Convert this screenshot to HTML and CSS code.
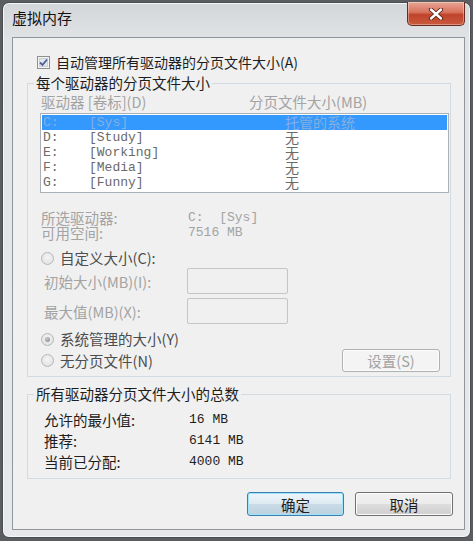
FILE: index.html
```html
<!DOCTYPE html>
<html lang="zh-CN">
<head>
    <meta charset="UTF-8">
    <meta name="viewport" content="width=device-width, initial-scale=1.0">
    <title>虚拟内存</title>
    <link rel="stylesheet" href="styles.css">
</head>
<body>
    <div class="window">
        <div class="titlebar">
            <span class="title">虚拟内存</span>
            <button class="close-btn">
                <svg width="16" height="12" viewBox="0 0 16 12">
                    <path d="M3 1.5 L13 10.5 M13 1.5 L3 10.5" stroke="#5a1d14" stroke-width="4.2" stroke-linecap="round"/>
                    <path d="M3 1.5 L13 10.5 M13 1.5 L3 10.5" stroke="#ffffff" stroke-width="2.4" stroke-linecap="round"/>
                </svg>
            </button>
        </div>

        <div class="client">
            <label class="check-row">
                <span class="checkbox">
                    <svg width="13" height="13" viewBox="0 0 13 13">
                        <rect x="0.5" y="0.5" width="12" height="12" fill="#f4f4f4" stroke="#8e8f8f"/>
                        <rect x="2.5" y="2.5" width="8" height="8" fill="#e2e6ea" stroke="#c9d0d6"/>
                        <path d="M3 6.5 L5.5 9 L10 3.5" fill="none" stroke="#4a5f97" stroke-width="1.8"/>
                    </svg>
                </span>
                自动管理所有驱动器的分页文件大小(A)
            </label>

            <fieldset class="group group-drives">
                <legend>每个驱动器的分页文件大小</legend>

                <div class="list-head">
                    <span class="col-drive">驱动器 [卷标](D)</span>
                    <span>分页文件大小(MB)</span>
                </div>

                <div class="listbox">
                    <div class="row selected"><span class="c1">C:</span><span class="c2">[Sys]</span><span class="c3">托管的系统</span></div>
                    <div class="row"><span class="c1">D:</span><span class="c2">[Study]</span><span class="c3">无</span></div>
                    <div class="row"><span class="c1">E:</span><span class="c2">[Working]</span><span class="c3">无</span></div>
                    <div class="row"><span class="c1">F:</span><span class="c2">[Media]</span><span class="c3">无</span></div>
                    <div class="row"><span class="c1">G:</span><span class="c2">[Funny]</span><span class="c3">无</span></div>
                </div>

                <div class="drive-info">
                    <div class="info-row"><span class="info-label">所选驱动器:</span><span class="mono">C:  [Sys]</span></div>
                    <div class="info-row"><span class="info-label">可用空间:</span><span class="mono">7516 MB</span></div>
                </div>

                <label class="radio-row custom">
                    <span class="radio"></span>自定义大小(C):
                </label>
                <div class="field-row first">
                    <span class="field-label">初始大小(MB)(I):</span>
                    <span class="edit"></span>
                </div>
                <div class="field-row">
                    <span class="field-label">最大值(MB)(X):</span>
                    <span class="edit"></span>
                </div>

                <label class="radio-row system">
                    <span class="radio checked"></span>系统管理的大小(Y)
                </label>
                <div class="last-row">
                    <label class="radio-row nofile">
                        <span class="radio"></span>无分页文件(N)
                    </label>
                    <button class="btn btn-disabled">设置(S)</button>
                </div>
            </fieldset>

            <fieldset class="group group-total">
                <legend>所有驱动器分页文件大小的总数</legend>
                <div class="total-row"><span class="total-label">允许的最小值:</span><span class="mono">16 MB</span></div>
                <div class="total-row"><span class="total-label">推荐:</span><span class="mono">6141 MB</span></div>
                <div class="total-row"><span class="total-label">当前已分配:</span><span class="mono">4000 MB</span></div>
            </fieldset>

            <div class="buttons">
                <button class="btn btn-default">确定</button>
                <button class="btn">取消</button>
            </div>
        </div>
    </div>
</body>
</html>
```

FILE: styles.css
```css
body {
    margin: 0;
    background-color: #5b5d60;
    font-family: "Noto Sans CJK SC", "Liberation Sans", sans-serif;
    font-size: 14.5px;
    color: #1e1e1e;
}

.window {
    margin: 2px 0 0 2px;
    width: 469px;
    height: 536px;
    box-sizing: border-box;
    padding: 0 5px 7px 9px;
    border: 1px solid #4a4d52;
    border-radius: 7px;
    background: linear-gradient(180deg, #d3d6d9 0px, #e2e4e6 40px, #e6e8ea 100%);
    box-shadow: inset 0 0 0 1px #f4f6f8;
}

/* title bar */
.titlebar {
    height: 34px;
    display: flex;
    justify-content: space-between;
    align-items: flex-start;
}

.title {
    padding-top: 7px;
    line-height: 16px;
    font-size: 15px;
    color: #111;
}

.close-btn {
    margin-top: -1px;
    width: 58px;
    height: 24px;
    padding: 0;
    border: 1px solid #6b2a20;
    border-top: none;
    border-radius: 0 0 5px 5px;
    background: linear-gradient(180deg, #e8a594 0%, #d8725d 45%, #c0432b 55%, #c85a3e 100%);
    box-shadow: inset 0 0 0 1px rgba(255,255,255,0.35);
    display: flex;
    align-items: center;
    justify-content: center;
}

/* client area */
.client {
    height: 493px;
    box-sizing: border-box;
    padding: 0 11px 0 14px;
    border: 1px solid #8f969c;
    background-color: #f0f0f0;
}

.check-row {
    margin-top: 16px;
    margin-left: 10px;
    height: 16px;
    line-height: 16px;
    display: flex;
    align-items: center;
    gap: 6px;
    font-size: 14px;
}

.checkbox {
    width: 13px;
    height: 13px;
    display: flex;
}

.group {
    margin: 0 2px 0 0;
    padding: 3px 1px 4px 6px;
    border: 1px solid #d3dbe1;
    min-width: 0;
}

.group legend {
    padding: 0 2px;
    line-height: 16px;
    color: #1e1e1e;
}

.group-drives {
    margin-top: 5px;
}

.list-head {
    margin-left: 7px;
    display: flex;
    line-height: 16px;
    color: #a3a3a3;
}

.col-drive {
    width: 208px;
}

.listbox {
    margin-top: 3px;
    margin-left: 6px;
    border: 1px solid #a9b0b6;
    background-color: #fff;
    padding: 1px 1px 2px;
    font-family: "Liberation Mono", "Noto Sans CJK SC", monospace;
    font-size: 13px;
    color: #6a6a6a;
}

.row {
    height: 15px;
    line-height: 15px;
    display: flex;
    padding-left: 1px;
}

.row.selected {
    background-color: #3399ff;
    color: #86aede;
}

.c1 {
    width: 46px;
}

.c2 {
    width: 196px;
}

.c3 {
    font-family: "Noto Sans CJK SC", sans-serif;
    font-size: 14px;
}

.mono {
    font-family: "Liberation Mono", "Noto Sans CJK SC", monospace;
    font-size: 13px;
    white-space: pre;
}

.drive-info {
    margin-top: 17px;
    margin-left: 7px;
    color: #a3a3a3;
}

.info-row {
    display: flex;
    line-height: 15px;
}

.info-label {
    width: 147px;
}

.radio-row {
    display: flex;
    align-items: center;
    gap: 6px;
    height: 16px;
    line-height: 16px;
    margin-left: 7px;
    color: #4d4d4d;
}

.radio {
    width: 11px;
    height: 11px;
    border: 1px solid #b4b8bb;
    border-radius: 50%;
    background: radial-gradient(circle at 50% 40%, #f4f4f4 0%, #e4e4e4 70%, #d8d8d8 100%);
    position: relative;
}

.radio.checked::after {
    content: "";
    position: absolute;
    left: 3px;
    top: 3px;
    width: 5px;
    height: 5px;
    border-radius: 50%;
    background: radial-gradient(circle at 40% 35%, #c4c4c4, #8a8a8a);
}

.radio-row.custom {
    margin-top: 10px;
}

.field-row {
    display: flex;
    align-items: center;
    height: 26px;
    margin-top: 4px;
    margin-left: 10px;
    color: #a3a3a3;
}

.field-row.first {
    margin-top: 2px;
}

.field-label {
    width: 143px;
}

.edit {
    width: 99px;
    height: 24px;
    border: 1px solid #c3c6c9;
    border-radius: 2px;
    background-color: #f0f0f0;
}

.radio-row.system {
    margin-top: 7px;
}

.last-row {
    margin-top: 2px;
    display: flex;
    justify-content: space-between;
    align-items: center;
    padding-right: 9px;
}

.btn {
    width: 98px;
    height: 24px;
    padding: 0;
    font-family: "Noto Sans CJK SC", sans-serif;
    font-size: 14.5px;
    color: #1e1e1e;
    border: 1px solid #707070;
    border-radius: 3px;
    background: linear-gradient(180deg, #f2f2f2 0%, #ebebeb 50%, #dddddd 51%, #cfcfcf 100%);
    box-shadow: inset 0 0 0 1px #fcfcfc;
}

.btn-disabled {
    height: 23px;
    border-color: #adb2b5;
    background: #f4f4f4;
    color: #a3a3a3;
}

.group-total {
    margin-top: 9px;
    padding: 7px 2px 6px 6px;
}

.total-row {
    display: flex;
    line-height: 21px;
    margin-left: 10px;
}

.total-label {
    width: 145px;
}

.buttons {
    margin-top: 13px;
    display: flex;
    justify-content: flex-end;
    gap: 11px;
}

.btn-default {
    width: 97px;
    border-color: #3c7fb1;
    background: linear-gradient(180deg, #eef6fb 0%, #dde9f1 50%, #c9dbe6 51%, #bcd2df 100%);
    box-shadow: inset 0 0 0 1px #9fe3fb;
}
```
